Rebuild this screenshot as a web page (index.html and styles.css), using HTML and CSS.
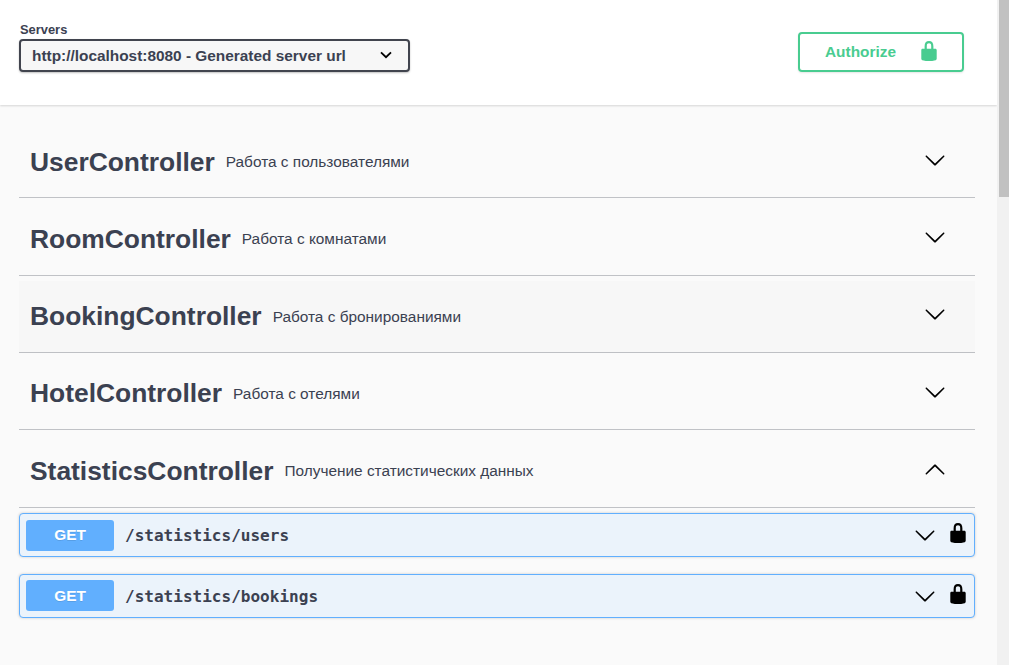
FILE: index.html
```html
<!DOCTYPE html>
<html lang="ru">
<head>
<meta charset="utf-8">
<title>Swagger UI</title>
<link rel="stylesheet" href="styles.css">
</head>
<body>
<svg class="symbols" aria-hidden="true">
  <symbol id="arrow" viewBox="0 0 20 20"><path d="M17.418 6.109c.272-.268.709-.268.979 0s.271.701 0 .969l-7.908 7.83c-.27.268-.707.268-.979 0l-7.908-7.83c-.27-.268-.27-.701 0-.969.271-.268.709-.268.979 0L10 13.25l7.418-7.141z"/></symbol>
  <symbol id="lock" viewBox="0 0 20 20"><path d="M15.8 8H14V5.6C14 2.703 12.665 1 10 1 7.334 1 6 2.703 6 5.6V8H4c-.553 0-1 .646-1 1.199V17c0 .549.428 1.139.951 1.307l1.197.387C5.672 18.861 6.55 19 7.1 19h5.8c.549 0 1.428-.139 1.951-.307l1.196-.387c.524-.167.953-.757.953-1.306V9.199C17 8.646 16.352 8 15.8 8zM12 8H8V5.199C8 3.754 8.797 3 10 3c1.203 0 2 .754 2 2.199V8z"/></symbol>
</svg>
<div class="page">
  <main class="content">
    <header class="scheme">
      <div class="servers">
        <span class="servers-title">Servers</span>
        <div class="select">
          <span class="select-text">http://localhost:8080 - Generated server url</span>
          <svg class="select-arrow" viewBox="0 0 12 8"><path d="M1 1.3 6 6.2 11 1.3"/></svg>
        </div>
      </div>
      <button class="authorize"><span class="authorize-text">Authorize</span><svg class="lock"><use href="#lock"/></svg></button>
    </header>
    <div class="tags">
      <section class="tag user"><h3>UserController</h3><p>Работа с пользователями</p><svg class="arrow"><use href="#arrow"/></svg></section>
      <section class="tag narrow room"><h3>RoomController</h3><p>Работа с комнатами</p><svg class="arrow"><use href="#arrow"/></svg></section>
      <section class="tag narrow booking hovered"><h3>BookingController</h3><p>Работа с бронированиями</p><svg class="arrow"><use href="#arrow"/></svg></section>
      <section class="tag hotel"><h3>HotelController</h3><p>Работа с отелями</p><svg class="arrow"><use href="#arrow"/></svg></section>
      <section class="tag narrow stats"><h3>StatisticsController</h3><p>Получение статистических данных</p><svg class="arrow up"><use href="#arrow"/></svg></section>
      <div class="operations">
        <div class="op"><span class="method">GET</span><span class="path">/statistics/users</span><svg class="arrow"><use href="#arrow"/></svg><svg class="lock"><use href="#lock"/></svg></div>
        <div class="op second"><span class="method">GET</span><span class="path">/statistics/bookings</span><svg class="arrow"><use href="#arrow"/></svg><svg class="lock"><use href="#lock"/></svg></div>
      </div>
    </div>
  </main>
  <div class="scrollbar"><div class="thumb"></div></div>
</div>
</body>
</html>
```
FILE: styles.css
```css
* { box-sizing: border-box; }
body { margin: 0; font-family: "Liberation Sans", Arial, sans-serif; color: #3b4151; background: #fafafa; overflow: hidden; }
.symbols { display: none; }
.page { display: flex; height: 665px; }
.content { flex: 1; }
.scheme { height: 105px; background: #fff; box-shadow: 0 1px 2px rgba(0,0,0,.15); display: flex; justify-content: space-between; align-items: flex-start; padding: 21px 33px 0 19px; }
.servers { display: flex; flex-direction: column; }
.servers-title { font-size: 12.9px; line-height: 17px; margin-bottom: 1px; font-weight: 700; padding-left: 1px; white-space: nowrap; }
.select { width: 391px; height: 33px; border: 2px solid #41444e; border-radius: 4px; background: #f7f7f7; box-shadow: 0 1px 2px rgba(0,0,0,.25); display: flex; align-items: center; justify-content: space-between; padding: 0 16px 0 11px; font-size: 15.4px; font-weight: 700; }
.select-text { white-space: nowrap; }
.select-arrow { width: 12px; height: 8px; margin-bottom: 1px; fill: none; stroke: #000; stroke-width: 1.8; }
.authorize { margin-top: 11px; width: 166px; height: 40px; border: 2px solid #49cc90; border-radius: 4px; background: transparent; box-shadow: 0 1px 2px rgba(0,0,0,.1); color: #49cc90; display: flex; align-items: center; justify-content: space-between; padding: 0 22px 2px 25px; font: 700 15.4px "Liberation Sans", Arial, sans-serif; }
.authorize-text { padding-top: 2px; }
.lock { width: 22px; height: 22px; fill: currentColor; flex: none; }
.tags { padding: 21px 22px 0 19px; }
.tag { height: 72px; margin-bottom: 6px; border-bottom: 1px solid rgba(59,65,81,.3); display: flex; align-items: center; padding: 0 29px 0 11px; }
.tag.narrow { margin-bottom: 5px; }
.hovered { background: #f7f7f7; }
.tag h3 { margin: 0 0 2px; font-size: 26.4px; line-height: 36px; }
.tag.user h3 { margin-bottom: 0; }
.tag p { margin: 1px 0 0 11px; font-size: 15.4px; line-height: 20px; }
.tag.room p, .tag.stats p { margin-top: 0; margin-bottom: 1px; }
.arrow { width: 22px; height: 22px; fill: #000; margin-left: auto; flex: none; }
.tag .arrow { margin-bottom: 4px; }
.tag.user .arrow { margin-bottom: 3px; }
.tag.room .arrow, .tag.booking .arrow { margin-bottom: 5px; }
.up { transform: rotate(180deg); }
.operations { display: flex; flex-direction: column; gap: 17px; }
.op { height: 44px; border: 1px solid #61affe; border-radius: 4px; background: #ebf3fb; box-shadow: 0 0 3px rgba(0,0,0,.19); display: flex; align-items: center; padding: 0 5px 0 6px; }
.method { width: 88px; height: 31px; border-radius: 3px; background: #61affe; color: #fff; font-size: 15.4px; line-height: 29px; font-weight: 700; text-align: center; text-shadow: 0 1px 0 rgba(0,0,0,.1); }
.second .method { margin-bottom: 1px; line-height: 31px; }
.path { margin-left: 11px; font: 700 16.05px "DejaVu Sans Mono", monospace; }
.op .arrow { margin-right: 11px; }
.op .lock { color: #000; margin-bottom: 4px; }
.scrollbar { width: 12px; background: #f1f1f1; padding-left: 2px; }
.thumb { height: 197px; background: #c1c1c1; }
```
